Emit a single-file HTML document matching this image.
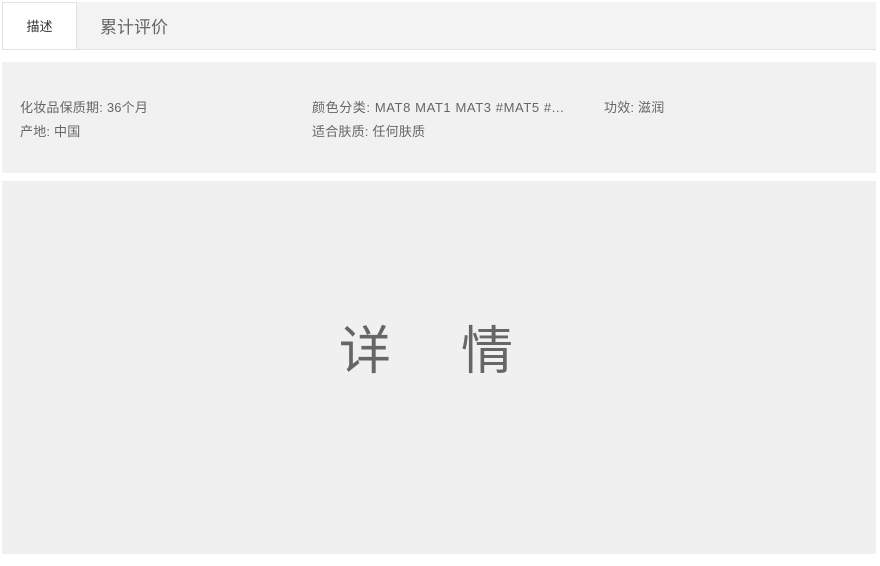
<!DOCTYPE html>
<html><head><meta charset="utf-8"><style>
body{margin:0;width:880px;height:566px;background:#fff;font-family:"Liberation Sans","Noto Sans CJK SC",sans-serif;position:relative;overflow:hidden}
.tabs{position:absolute;left:2px;top:2px;width:874px;height:47px;background:#f3f3f3;border-bottom:1px solid #dde3e6}
.t1{position:absolute;left:0;top:0;width:75px;height:47px;background:#fff;border:1px solid #dde3e6;border-bottom:none;box-sizing:border-box;font-size:13px;color:#333;text-align:center;line-height:48px}
.t2{position:absolute;left:98px;top:0;line-height:52px;font-size:17px;color:#666}
.info{position:absolute;left:2px;top:62px;width:874px;height:111px;background:#f1f1f1}
.info span{position:absolute;font-size:13px;color:#666;white-space:nowrap;letter-spacing:0.2px}
.info span.m{letter-spacing:0.6px}
.det{position:absolute;left:2px;top:181px;width:874px;height:373px;background:#f0f0f0}
.det div{position:absolute;left:337px;top:139px;font-size:52px;color:#666;letter-spacing:70px;line-height:64px}
</style></head><body>
<div class="tabs"><div class="t1">描述</div><div class="t2">累计评价</div></div>
<div class="info">
<span style="left:18px;top:35px">化妆品保质期: 36个月</span>
<span style="left:18px;top:59px">产地: 中国</span>
<span class="m" style="left:310px;top:35px">颜色分类: MAT8 MAT1 MAT3 #MAT5 #...</span>
<span style="left:310px;top:59px">适合肤质: 任何肤质</span>
<span style="left:602px;top:35px">功效: 滋润</span>
</div>
<div class="det"><div>详情</div></div>
</body></html>
